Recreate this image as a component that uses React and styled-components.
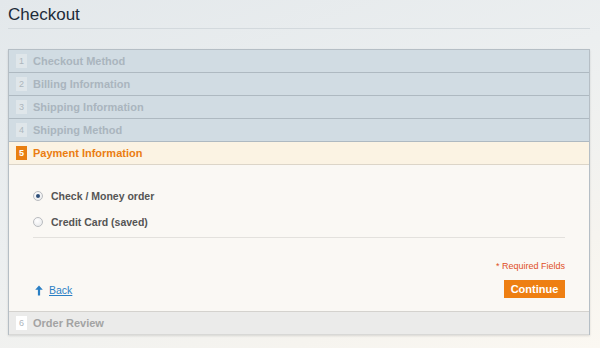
import React from 'react';
import styled, { createGlobalStyle } from 'styled-components';

const GlobalStyle = createGlobalStyle`
    html, body {
        margin:0;
        padding:0;
    }
    body {
        width:600px;
        height:348px;
        overflow:hidden;
        font-family:"Liberation Sans", Arial, sans-serif;
        background:linear-gradient(160deg, #e3e8eb 0%, #eceff0 45%, #f6f4ef 80%, #fbf8f2 100%);
    }
`;

const steps = [
    { n: 1, label: 'Checkout Method' },
    { n: 2, label: 'Billing Information' },
    { n: 3, label: 'Shipping Information' },
    { n: 4, label: 'Shipping Method' },
];

const methods = [
    { label: 'Check / Money order', checked: true },
    { label: 'Credit Card (saved)', checked: false },
];

const App = () => {
    return (
        <Page>
            <GlobalStyle />
            <Title>Checkout</Title>
            <Steps>
                {steps.map((s) => (
                    <StepRow key={s.n}>
                        <Num>{s.n}</Num>
                        <StepLabel>{s.label}</StepLabel>
                    </StepRow>
                ))}
                <StepRow active>
                    <Num active>5</Num>
                    <StepLabel active>Payment Information</StepLabel>
                </StepRow>
                <Content>
                    <Methods>
                        {methods.map((m) => (
                            <Method key={m.label}>
                                <Radio checked={m.checked} />
                                <MethodLabel>{m.label}</MethodLabel>
                            </Method>
                        ))}
                    </Methods>
                    <Required>* Required Fields</Required>
                    <Actions>
                        <BackLink>
                            <svg width="8" height="11" viewBox="0 0 8 11">
                                <path d="M4 0.5 L7.8 4.8 L5.1 4.8 L5.1 10.5 L2.9 10.5 L2.9 4.8 L0.2 4.8 Z" fill="#2a7fc4" />
                            </svg>
                            <a href="#back">Back</a>
                        </BackLink>
                        <ContinueButton>Continue</ContinueButton>
                    </Actions>
                </Content>
                <StepRow last>
                    <Num last>6</Num>
                    <StepLabel last>Order Review</StepLabel>
                </StepRow>
            </Steps>
        </Page>
    );
};

export default App;

const Page = styled.div`
    padding:0 10px 0 8px;
`;

const Title = styled.h1`
    margin:0;
    padding:5px 0 0;
    height:23px;
    font-size:17px;
    font-weight:normal;
    color:#1d2b39;
    border-bottom:1px solid #d3d9dd;
    line-height:20px;
`;

const Steps = styled.div`
    margin-top:20px;
    border:1px solid #b5bec5;
    border-bottom:none;
    box-shadow:0 1px 2px rgba(0,0,0,0.12);
`;

const StepRow = styled.div`
    display:flex;
    align-items:center;
    gap:6px;
    height:22px;
    padding-left:7px;
    background:${(p) => (p.active ? '#fbf3e3' : p.last ? '#ebebea' : '#d1dce3')};
    border-bottom:1px solid ${(p) => (p.active ? '#dcd5c8' : p.last ? '#d8d8d6' : '#aeb9c1')};
    border-top:${(p) => (p.last ? '1px solid #d4d2ce' : 'none')};
`;

const Num = styled.span`
    display:flex;
    align-items:center;
    justify-content:center;
    width:11px;
    height:14px;
    font-size:9px;
    font-weight:${(p) => (p.active ? 'bold' : 'normal')};
    color:${(p) => (p.active ? '#ffffff' : '#adb6bd')};
    background:${(p) => (p.active ? '#e97f10' : p.last ? '#ffffff' : '#dfe6ea')};
`;

const StepLabel = styled.span`
    font-size:11px;
    font-weight:bold;
    color:${(p) => (p.active ? '#ea7d12' : p.last ? '#a3a3a3' : '#aab5be')};
`;

const Content = styled.div`
    display:flex;
    flex-direction:column;
    padding:18px 24px 13px;
    background:#faf8f4;
`;

const Methods = styled.div`
    display:flex;
    flex-direction:column;
    padding-bottom:2px;
    border-bottom:1px solid #e3e1dd;
`;

const Method = styled.div`
    display:flex;
    align-items:center;
    gap:8px;
    height:26px;
`;

const Radio = styled.span`
    position:relative;
    width:8px;
    height:8px;
    border-radius:50%;
    border:1px solid #b9bcbf;
    background:radial-gradient(circle at 40% 35%, #ffffff 0%, #e4e6e8 100%);
    &::after{
        content:'';
        display:${(p) => (p.checked ? 'block' : 'none')};
        position:absolute;
        left:2px;
        top:2px;
        width:4px;
        height:4px;
        border-radius:50%;
        background:#2d4f78;
    }
`;

const MethodLabel = styled.span`
    font-size:10.5px;
    font-weight:bold;
    color:#555555;
`;

const Required = styled.div`
    margin-top:21px;
    align-self:flex-end;
    font-size:9px;
    line-height:14px;
    color:#e04f26;
`;

const Actions = styled.div`
    display:flex;
    justify-content:space-between;
    align-items:center;
    margin-top:7px;
`;

const BackLink = styled.div`
    display:flex;
    align-items:center;
    gap:6px;
    padding-left:2px;
    margin-top:2px;
    a {
        font-size:10.5px;
        color:#2a7fc4;
        text-decoration:underline;
    }
`;

const ContinueButton = styled.button`
    width:61px;
    height:18px;
    padding:0;
    border:none;
    background:#ee7f12;
    color:#ffffff;
    font-family:"Liberation Sans", Arial, sans-serif;
    font-size:11px;
    font-weight:bold;
`;
